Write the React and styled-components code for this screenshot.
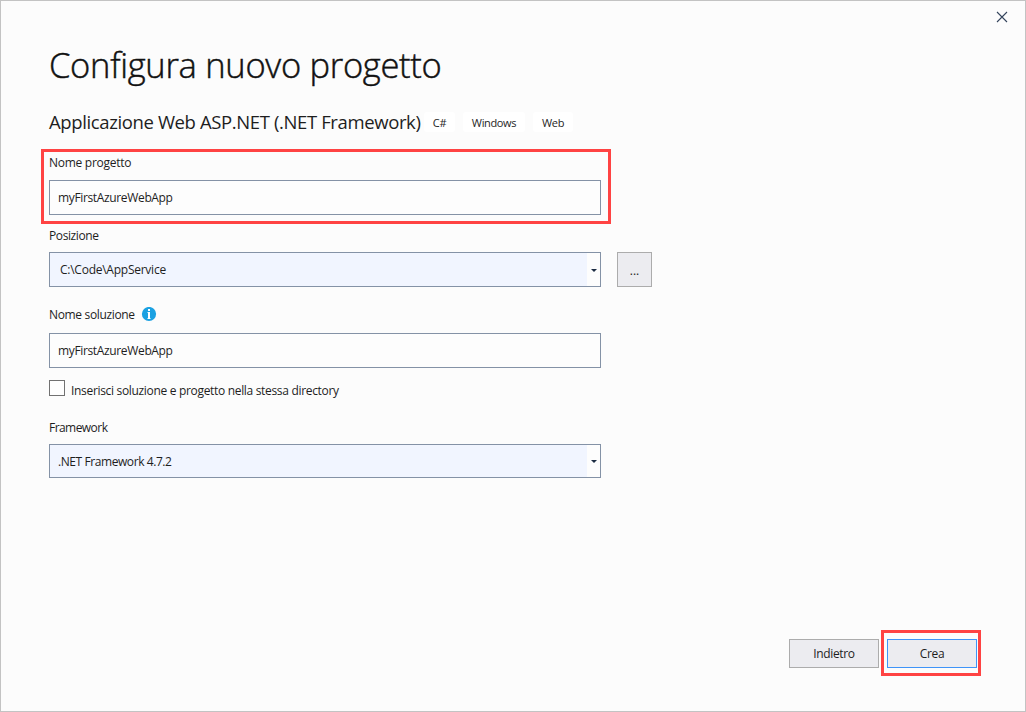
import React from "react";
import styled, { createGlobalStyle } from "styled-components";

const GlobalStyle = createGlobalStyle`
  * { box-sizing: border-box; }
  body { margin: 0; font-family: "Open Sans", "Noto Sans", sans-serif; font-size: 12px; color: #1e1e1e; }
`;

const Dialog = styled.main`
  display: flex;
  flex-direction: column;
  width: 1026px;
  height: 712px;
  border: 1px solid #c3c3c3;
  background: #fcfcfc;
`;

const TitleBar = styled.div`
  display: flex;
  justify-content: flex-end;
  height: 32px;
  padding: 10px 17px 0 0;
`;

const CloseButton = styled.button`
  display: flex;
  width: 12px;
  height: 12px;
  padding: 0;
  border: 0;
  background: none;
`;

const Content = styled.div`
  flex: 1;
  padding: 0 0 0 48px;
`;

const Text = styled.span`
  display: inline-block;
  white-space: nowrap;
  letter-spacing: ${(p) => p.$spacing || 0}px;
`;

const Title = styled.h1`
  margin: 0;
  height: 66px;
  font-size: 34.5px;
  font-weight: 300;
  -webkit-text-stroke: 0.45px #111;
  line-height: 64px;
  color: #111;
`;

const TemplateRow = styled.div`
  display: flex;
  align-items: center;
  height: 48px;
  padding-bottom: 2px;
`;

const TemplateName = styled.h2`
  flex: none;
  width: 375px;
  margin: 0;
  font-size: 18.5px;
  font-weight: 400;
  line-height: 26px;
`;

const Tag = styled.span`
  display: flex;
  align-items: center;
  justify-content: center;
  width: ${(p) => p.$width}px;
  height: 20px;
  margin-right: 8px;
  border-radius: 3px;
  background: #fff;
  font-size: 11px;
`;

const Field = styled.section`
  position: relative;
  width: 552px;
  height: ${(p) => p.$height}px;
`;

const Label = styled.label`
  display: flex;
  align-items: center;
  gap: 6px;
  height: ${(p) => p.$height}px;
  padding-bottom: ${(p) => p.$lift || 0}px;
  padding-top: ${(p) => p.$drop || 0}px;
  line-height: 18px;
`;

const Highlight = styled.div`
  position: absolute;
  inset: ${(p) => p.$inset};
  border: 3px solid #ff4343;
  pointer-events: none;
`;

const TextBox = styled.div`
  display: flex;
  align-items: center;
  height: 35px;
  padding-left: 8px;
  border: 1px solid #8492a6;
  background: #fdfdfd;
`;

const ComboBox = styled.div`
  display: flex;
  flex: none;
  width: 552px;
  height: ${(p) => p.$height}px;
  border: 1px solid #8492a6;
  background: #fdfdfd;
`;

const ComboValue = styled.div`
  display: flex;
  align-items: center;
  flex: 1;
  padding-left: ${(p) => p.$indent}px;
  background: #f1f5ff;
`;

const ComboArrow = styled.div`
  display: flex;
  align-items: center;
  justify-content: center;
  width: 13px;
  padding-top: ${(p) => p.$drop}px;
`;

const ControlRow = styled.div`
  display: flex;
  gap: 16px;
`;

const Button = styled.button`
  display: flex;
  align-items: center;
  justify-content: center;
  flex: none;
  width: ${(p) => p.$width}px;
  height: ${(p) => p.$height}px;
  padding: ${(p) => p.$drop || 0}px 0 0;
  border: 1px solid ${(p) => (p.$primary ? "#3f94f8" : "#acacac")};
  background: #ececf0;
  color: #1e1e1e;
  font: inherit;
`;

const CheckRow = styled.label`
  display: flex;
  gap: 6px;
  height: 50px;
  padding-top: 12px;
  line-height: 22px;
`;

const CheckBox = styled.span`
  width: 16px;
  height: 16px;
  border: 1px solid #717171;
  background: #fefefe;
`;

const Footer = styled.footer`
  display: flex;
  align-items: flex-start;
  justify-content: flex-end;
  gap: 8px;
  height: 72px;
  padding-right: 48px;
`;

const ButtonFrame = styled.div`
  position: relative;
`;

const CloseIcon = () => (
  <svg width="12" height="12" viewBox="0 0 12 12" stroke="#34445c" strokeWidth="1.1">
    <path d="M1 1 11 11M11 1 1 11" />
  </svg>
);

const ArrowIcon = () => (
  <svg width="6" height="3" viewBox="0 0 6 3" fill="#1b2b42">
    <path d="M0 0h6L3 3z" />
  </svg>
);

const InfoIcon = () => (
  <svg width="16" height="16" viewBox="0 0 16 16">
    <circle cx="8" cy="7" r="7.1" fill="#1ba1e2" />
    <path d="M7 2h2v2H7zM6.5 5H9v6h.5v1h-3v-1H7V6h-.5z" fill="#fff" />
  </svg>
);

export default function App() {
  return (
    <>
      <GlobalStyle />
      <Dialog>
        <TitleBar>
          <CloseButton aria-label="Chiudi"><CloseIcon /></CloseButton>
        </TitleBar>
        <Content>
          <Title><Text $spacing={-0.29}>Configura nuovo progetto</Text></Title>
          <TemplateRow>
            <TemplateName><Text $spacing={-0.38}>Applicazione Web ASP.NET (.NET Framework)</Text></TemplateName>
            <Tag $width={31}><Text $spacing={-0.3}>C#</Text></Tag>
            <Tag $width={62}><Text $spacing={-0.35}>Windows</Text></Tag>
            <Tag $width={40}><Text $spacing={-0.3}>Web</Text></Tag>
          </TemplateRow>
          <Field $height={73}>
            <Highlight $inset="2px -10px -4px -8px" />
            <Label $height={33} $lift={1}><Text $spacing={-0.27}>Nome progetto</Text></Label>
            <TextBox><Text $spacing={-0.35}>myFirstAzureWebApp</Text></TextBox>
          </Field>
          <Field $height={75}>
            <Label $height={32}><Text $spacing={-0.4}>Posizione</Text></Label>
            <ControlRow>
              <ComboBox $height={35}>
                <ComboValue $indent={10}><Text $spacing={-0.25}>C:\Code\AppService</Text></ComboValue>
                <ComboArrow $drop={2}><ArrowIcon /></ComboArrow>
              </ComboBox>
              <Button $width={35} $height={35} $drop={2}><Text>...</Text></Button>
            </ControlRow>
          </Field>
          <Field $height={73}>
            <Label $height={38} $drop={2}><Text $spacing={-0.34}>Nome soluzione</Text><InfoIcon /></Label>
            <TextBox><Text $spacing={-0.35}>myFirstAzureWebApp</Text></TextBox>
          </Field>
          <CheckRow>
            <CheckBox />
            <Text $spacing={-0.32}>Inserisci soluzione e progetto nella stessa directory</Text>
          </CheckRow>
          <Field $height={60}>
            <Label $height={26} $lift={6}><Text $spacing={-0.55}>Framework</Text></Label>
            <ComboBox $height={34}>
              <ComboValue $indent={8}><Text $spacing={-0.42}>.NET Framework 4.7.2</Text></ComboValue>
              <ComboArrow $drop={1}><ArrowIcon /></ComboArrow>
            </ComboBox>
          </Field>
        </Content>
        <Footer>
          <Button $width={90} $height={29}><Text $spacing={-0.35}>Indietro</Text></Button>
          <ButtonFrame>
            <Button $primary $width={90} $height={29}><Text $spacing={-0.35}>Crea</Text></Button>
            <Highlight $inset="-9px -4px -8px -6px" />
          </ButtonFrame>
        </Footer>
      </Dialog>
    </>
  );
}
